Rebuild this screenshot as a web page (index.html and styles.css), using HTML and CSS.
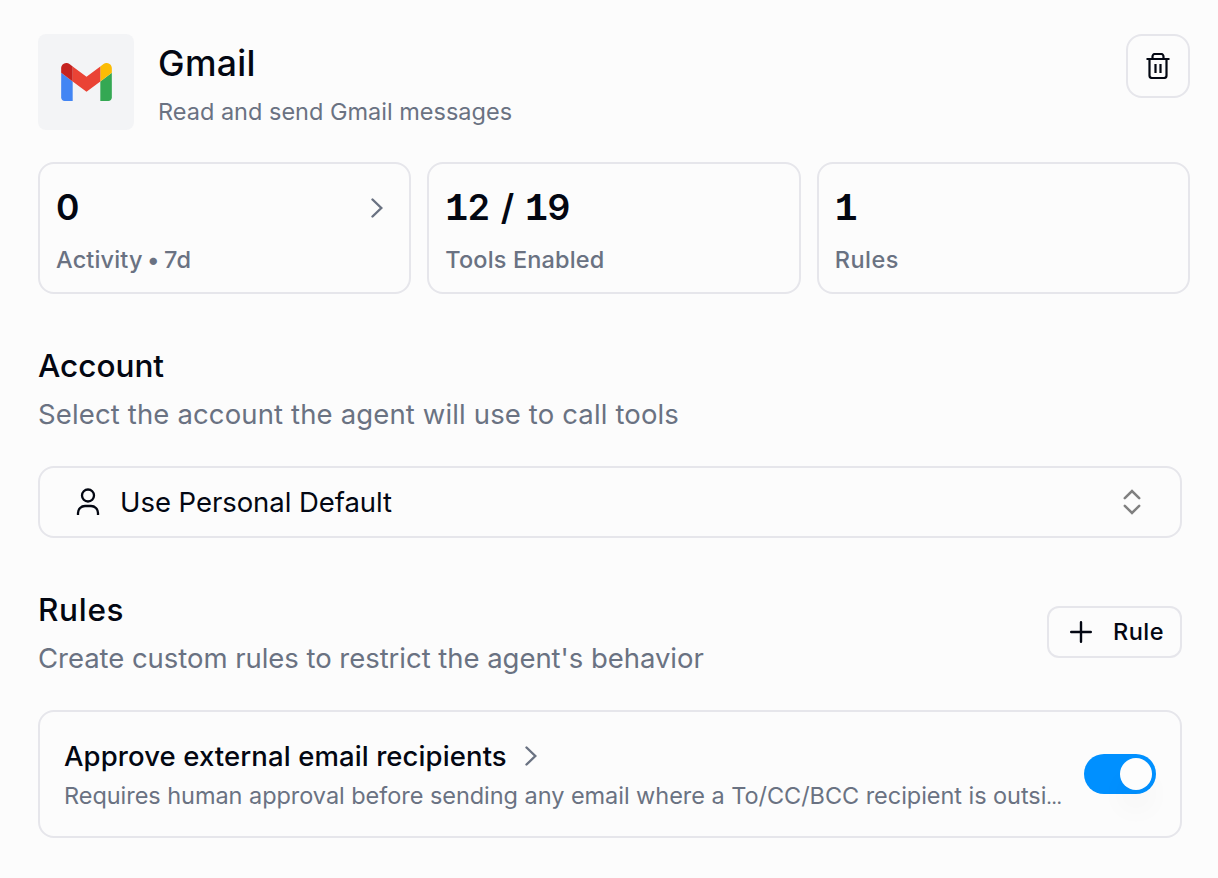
FILE: index.html
```html
<!DOCTYPE html>
<html lang="en">
<head>
<meta charset="utf-8">
<title>Gmail</title>
<link rel="stylesheet" href="styles.css">
</head>
<body>
<main class="page">
  <header class="header">
    <div class="logo-tile">
      <svg class="logo" viewBox="52 42 88 66">
        <path fill="#4285f4" d="M58 108h14V74L52 59v43c0 3.320 2.690 6 6 6"/>
        <path fill="#34a853" d="M120 108h14c3.320 0 6-2.690 6-6V59l-20 15"/>
        <path fill="#fbbc04" d="M120 48v26l20-15v-8c0-7.420-8.470-11.650-14.400-7.200"/>
        <path fill="#ea4335" d="M72 74V48l24 18 24-18v26L96 92"/>
        <path fill="#c5221f" d="M52 51v8l20 15V48l-5.600-4.200c-5.940-4.450-14.400-.220-14.400 7.200"/>
      </svg>
    </div>
    <div class="heading">
      <h1 class="title">Gmail</h1>
      <p class="subtitle">Read and send Gmail messages</p>
    </div>
    <button class="delete" aria-label="Delete">
      <svg width="24" height="26" viewBox="0 0 24 26" fill="none" stroke="currentColor" stroke-width="2.200">
        <path d="M.5 6h23M6.500 5.500V3.500a2.500 2.500 0 0 1 2.500-2.500h6a2.500 2.500 0 0 1 2.500 2.500v2M3.500 6v16.500a2.500 2.500 0 0 0 2.500 2.500h12a2.500 2.500 0 0 0 2.500-2.500V6M9.500 11v9M14.500 11v9"/>
      </svg>
    </button>
  </header>

  <section class="stats">
    <div class="stat">
      <div class="stat-value"><span>0</span>
        <svg class="chevron" width="12" height="20" viewBox="0 0 12 20"><path d="M1.500 1.500 10.300 10l-8.800 8.500"/></svg>
      </div>
      <div class="stat-label label-activity">Activity • 7d</div>
    </div>
    <div class="stat">
      <div class="stat-value"><span class="ratio"><span class="one">1</span>2 / <span class="one">1</span>9</span></div>
      <div class="stat-label label-tools">Tools Enabled</div>
    </div>
    <div class="stat">
      <div class="stat-value"><span><span class="one">1</span></span></div>
      <div class="stat-label label-rules">Rules</div>
    </div>
  </section>

  <section class="section account">
    <h2 class="section-title">Account</h2>
    <p class="section-text text-account">Select the account the agent will use to call tools</p>
    <div class="select">
      <svg width="24" height="28" viewBox="0 0 24 28" fill="none" stroke="currentColor" stroke-width="2.300">
        <circle cx="12" cy="7.500" r="6"/><path d="M2 27v-2a7 7 0 0 1 7-7h6a7 7 0 0 1 7 7v2"/>
      </svg>
      <span class="select-value">Use Personal Default</span>
      <svg class="updown" width="18" height="26" viewBox="0 0 18 26" fill="none" stroke="#808080" stroke-width="2.500" stroke-linecap="round"><path d="M1.800 9.200 9 2l7.200 7.200M1.800 16.800 9 24l7.200-7.200"/></svg>
    </div>
  </section>

  <section class="section rules">
    <div class="section-head">
      <div>
        <h2 class="section-title title-rules">Rules</h2>
        <p class="section-text text-rules">Create custom rules to restrict the agent's behavior</p>
      </div>
      <button class="add">
        <svg width="22" height="22" viewBox="0 0 22 22" fill="none" stroke="currentColor" stroke-width="2.400" stroke-linecap="round"><path d="M11 1.200v19.600M1.200 11h19.600"/></svg>
        <span>Rule</span>
      </button>
    </div>
    <div class="rule">
      <div class="rule-body">
        <div class="rule-title"><span>Approve external email recipients</span>
          <svg class="chevron" width="12" height="20" viewBox="0 0 12 20"><path d="M1.500 1.500 10.300 10l-8.800 8.500"/></svg>
        </div>
        <div class="rule-text">Requires human approval before sending any email where a To/CC/BCC recipient is outsi<span class="dots">…</span></div>
      </div>
      <div class="toggle" role="switch" aria-checked="true"><div class="thumb"></div></div>
    </div>
  </section>
</main>
</body>
</html>
```
FILE: styles.css
```css
* { box-sizing: border-box; }
body {
  margin: 0;
  background: #fcfcfc;
  color: #030712;
  font-family: Inter, "Liberation Sans", sans-serif;
}
h1, h2, p { margin: 0; }
svg { display: block; flex: none; }
button { font: inherit; color: inherit; background: none; padding: 0; }
.page { width: 1218px; height: 878px; padding: 34px 28px 0 38px; overflow: hidden; white-space: nowrap; }

.header { display: flex; height: 96px; }
.logo-tile { width: 96px; height: 96px; padding-left: 22.500px; border-radius: 8px; background: #f3f4f6; display: flex; align-items: center; }
.logo { width: 51px; height: 38px; }
.heading { flex: 1; padding-left: 24px; }
.title { font-size: 35.500px; font-weight: 500; line-height: 60px; height: 60px; letter-spacing: .350px; }
.subtitle { font-size: 23.500px; line-height: 36px; color: #6a7282; }
.delete { width: 64px; height: 64px; border: 2px solid #e6e6eb; border-radius: 16px; display: flex; align-items: center; justify-content: center; }

.stats { display: grid; grid-template-columns: repeat(3, 1fr); gap: 16px; margin-top: 32px; }
.stat { height: 132px; border: 2px solid #e6e6eb; border-radius: 16px; padding: 16px; }
.stat-value { display: flex; align-items: center; justify-content: space-between; height: 56px; padding-right: 10px; font-size: 35.500px; font-weight: 600; line-height: 56px; }
.ratio { letter-spacing: 1px; }
.one { font-family: "Liberation Mono", monospace; font-weight: 700; font-size: 38px; line-height: 1; letter-spacing: -.500px; }
.stat-label { font-size: 23.500px; font-weight: 500; line-height: 32px; margin-top: 8px; color: #6a7282; }
.label-activity { word-spacing: -2px; letter-spacing: .150px; }
.label-tools { letter-spacing: .150px; }
.label-rules { letter-spacing: .500px; }
.chevron { fill: none; stroke: #6a7282; stroke-width: 2.400; stroke-linecap: round; }

.section { padding-right: 8px; }
.account { margin-top: 48px; }
.section-title { font-size: 31.500px; font-weight: 500; line-height: 48px; }
.title-rules { letter-spacing: .700px; }
.section-text { font-size: 27.500px; line-height: 40px; margin-top: 4px; color: #6a7282; }
.text-account { letter-spacing: .140px; }
.text-rules { letter-spacing: -.040px; }
.select { display: flex; align-items: center; height: 72px; margin-top: 32px; padding: 0 39px 0 36px; border: 2px solid #e6e6eb; border-radius: 16px; }
.select-value { flex: 1; padding-left: 20px; font-size: 27.500px; letter-spacing: -.050px; }
.rules { margin-top: 48px; }
.section-head { display: flex; justify-content: space-between; align-items: flex-start; }
.add { width: 135px; height: 52px; margin-top: 20px; padding: 0 0 1px 21px; display: flex; align-items: center; gap: 21px; border: 2px solid #e6e6eb; border-radius: 12px; font-size: 23.500px; font-weight: 500; letter-spacing: .500px; }
.rule { display: flex; align-items: center; justify-content: space-between; height: 128px; margin-top: 32px; padding: 0 24px; border: 2px solid #e6e6eb; border-radius: 16px; }
.rule-title { display: flex; align-items: center; gap: 18px; font-size: 27.500px; font-weight: 500; line-height: 40px; letter-spacing: .100px; }
.rule-text { height: 32px; font-size: 23.500px; line-height: 32px; margin-top: 4px; color: #6a7282; letter-spacing: -.045px; }
.dots { letter-spacing: 0; font-size: 16px; font-weight: 600; line-height: 1; }
.toggle { flex: none; width: 72px; height: 40px; padding: 4px; border-radius: 20px; background: #0090ff; display: flex; justify-content: flex-end; }
.thumb { width: 32px; height: 32px; border-radius: 16px; background: #fdfdfd; box-shadow: 0 20px 30px -4px rgba(0, 0, 0, .060); }
```
